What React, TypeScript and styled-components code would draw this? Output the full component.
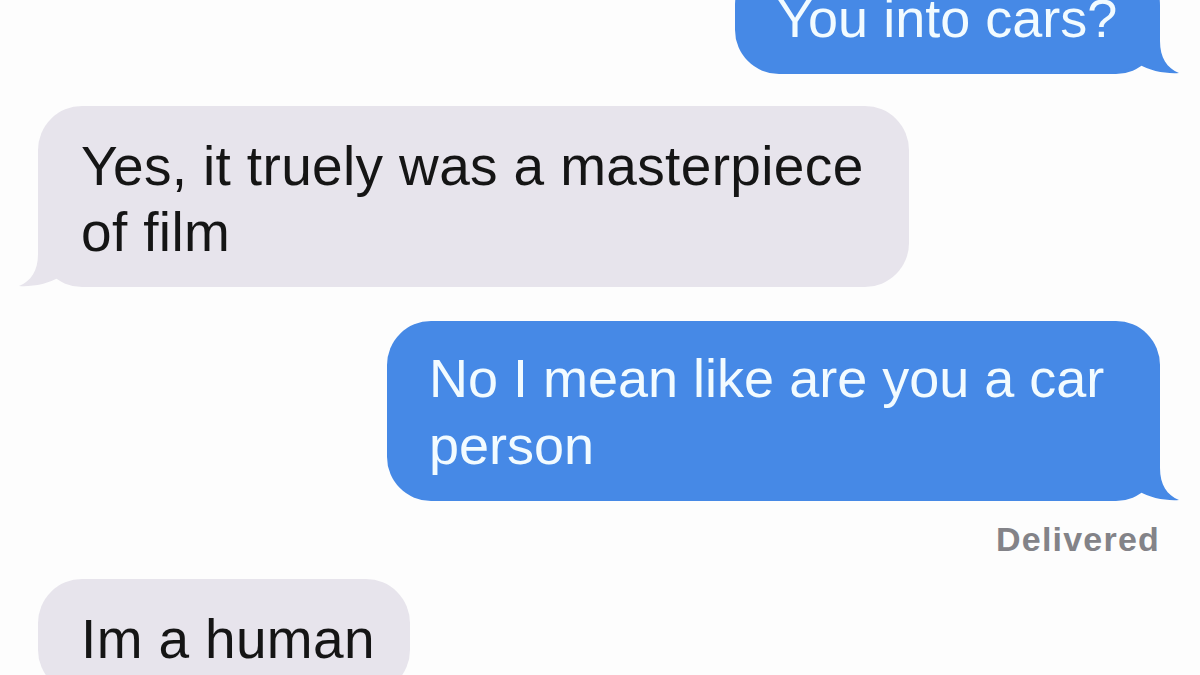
import React from "react";
import styled, { createGlobalStyle, css } from "styled-components";

const GlobalStyle = createGlobalStyle`
  html, body {
    margin: 0;
    padding: 0;
    background: #fdfdfd;
    font-family: "Liberation Sans", Arial, Helvetica, sans-serif;
    overflow: hidden;
  }
  #root {
    width: 1200px;
    height: 675px;
    overflow: hidden;
  }
`;

const Thread = styled.div`
  width: 1200px;
  height: 675px;
  display: flex;
  flex-direction: column;
  box-sizing: border-box;
  padding: 0 40px 0 38px;
  overflow: hidden;
`;

const Row = styled.div<{ $side: "left" | "right"; $gap: number }>`
  display: flex;
  justify-content: ${(p) => (p.$side === "right" ? "flex-end" : "flex-start")};
  margin-top: ${(p) => p.$gap}px;
  flex-shrink: 0;
`;

const Bubble = styled.div<{ $side: "left" | "right"; $width: number }>`
  position: relative;
  box-sizing: border-box;
  width: ${(p) => p.$width}px;
  border-radius: 44px;
  ${(p) =>
    p.$side === "right"
      ? css`
          background: #4689e6;
          color: #f2fbff;
          font-size: 54px;
          line-height: 67px;
          padding: 24px 36px 22px 42px;
        `
      : css`
          background: #e7e4ec;
          color: #151515;
          font-size: 55px;
          line-height: 66px;
          letter-spacing: 0.35px;
          padding: 27px 28px 22px 43px;
        `}
`;

const Tail = styled.svg<{ $side: "left" | "right" }>`
  position: absolute;
  bottom: -2px;
  width: 66px;
  height: 50px;
  ${(p) =>
    p.$side === "right"
      ? css`
          right: -21px;
        `
      : css`
          left: -21px;
          transform: scaleX(-1);
        `}
`;

const Status = styled.div`
  display: flex;
  justify-content: flex-end;
  margin-top: 18px;
  font-size: 34px;
  line-height: 40px;
  font-weight: 700;
  letter-spacing: 1.2px;
  color: #838388;
  flex-shrink: 0;
`;

const TailShape: React.FC<{ side: "left" | "right"; color: string }> = ({ side, color }) => (
  <Tail $side={side} viewBox="0 0 66 50" aria-hidden>
    <path
      d="M0 0 L45 0 L45 15 C45 32 52 42 64 47 C52 48 34 45 24 38 C18 42 10 45 0 45 Z"
      fill={color}
    />
  </Tail>
);

type Msg = {
  side: "left" | "right";
  text: string;
  width: number;
  gap: number;
  tail: boolean;
};

const messages: Msg[] = [
  { side: "right", text: "You into cars?", width: 425, gap: -39, tail: true },
  { side: "left", text: "Yes, it truely was a masterpiece of film", width: 871, gap: 32, tail: true },
  { side: "right", text: "No I mean like are you a car person", width: 773, gap: 34, tail: true },
];

export default function App() {
  return (
    <>
      <GlobalStyle />
      <Thread>
        {messages.map((m, i) => (
          <Row key={i} $side={m.side} $gap={m.gap}>
            <Bubble $side={m.side} $width={m.width}>
              {m.text}
              {m.tail && (
                <TailShape side={m.side} color={m.side === "right" ? "#4689e6" : "#e7e4ec"} />
              )}
            </Bubble>
          </Row>
        ))}
        <Status>Delivered</Status>
        <Row $side="left" $gap={20}>
          <Bubble $side="left" $width={372}>
            Im a human
          </Bubble>
        </Row>
      </Thread>
    </>
  );
}
